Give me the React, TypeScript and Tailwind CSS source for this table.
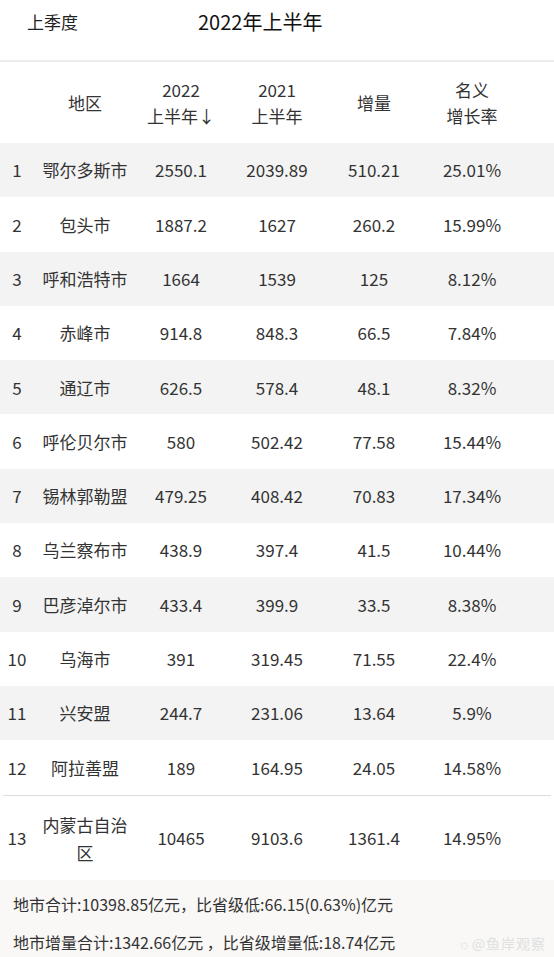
import React from "react";

const rows: [string, string, string, string, string, string][] = [
  ["1", "鄂尔多斯市", "2550.1", "2039.89", "510.21", "25.01%"],
  ["2", "包头市", "1887.2", "1627", "260.2", "15.99%"],
  ["3", "呼和浩特市", "1664", "1539", "125", "8.12%"],
  ["4", "赤峰市", "914.8", "848.3", "66.5", "7.84%"],
  ["5", "通辽市", "626.5", "578.4", "48.1", "8.32%"],
  ["6", "呼伦贝尔市", "580", "502.42", "77.58", "15.44%"],
  ["7", "锡林郭勒盟", "479.25", "408.42", "70.83", "17.34%"],
  ["8", "乌兰察布市", "438.9", "397.4", "41.5", "10.44%"],
  ["9", "巴彦淖尔市", "433.4", "399.9", "33.5", "8.38%"],
  ["10", "乌海市", "391", "319.45", "71.55", "22.4%"],
  ["11", "兴安盟", "244.7", "231.06", "13.64", "5.9%"],
  ["12", "阿拉善盟", "189", "164.95", "24.05", "14.58%"],
];

const grid = "grid grid-cols-[34px_102px_90px_102px_92px_104px_30px] items-center";

export default function App() {
  return (
    <div
      className="w-[554px] h-[957px] overflow-hidden bg-white text-[#333] text-[17px]"
      style={{ fontFamily: '"Noto Sans CJK SC", "Noto Sans", sans-serif' }}
    >
      {/* title bar */}
      <div className="h-[60px] relative">
        <div className="absolute left-[27px] top-[9px] text-[17px] leading-[26px] text-[#222]">上季度</div>
        <div className="absolute left-[198px] top-[7px] text-[20px] leading-[30px] text-[#111]">2022年上半年</div>
      </div>
      <div className="h-[2px] bg-[#ececec]" />
      {/* header */}
      <div className={`${grid} h-[81px] leading-[26px] text-center`}>
        <div />
        <div>地区</div>
        <div>
          <div>2022</div>
          <div>上半年↓</div>
        </div>
        <div>
          <div>2021</div>
          <div>上半年</div>
        </div>
        <div>增量</div>
        <div>
          <div>名义</div>
          <div>增长率</div>
        </div>
        <div />
      </div>
      {/* rows */}
      {rows.map((r, i) => (
        <div
          key={r[0]}
          className={`${grid} h-[54.3px] text-center ${i % 2 === 0 ? "bg-[#f3f3f3]" : "bg-white"}`}
        >
          {r.map((c, j) => (
            <div key={j}>{c}</div>
          ))}
          <div />
        </div>
      ))}
      <div className="h-[1px] bg-[#dcdcdc] mx-[3px]" />
      <div className={`${grid} h-[84px] text-center leading-[28px]`}>
        <div>13</div>
        <div className="pt-[2px]">
          <div>内蒙古自治</div>
          <div>区</div>
        </div>
        <div>10465</div>
        <div>9103.6</div>
        <div>1361.4</div>
        <div>14.95%</div>
        <div />
      </div>
      {/* footer */}
      <div className="relative bg-[#f9f8f6] h-[80px] pl-[13px] pt-[5px] text-[16px] leading-[38px] text-[#333]">
        <div>地市合计:10398.85亿元，比省级低:66.15(0.63%)亿元</div>
        <div>地市增量合计:1342.66亿元 ，比省级增量低:18.74亿元</div>
        <div className="absolute right-[8px] bottom-[8px] text-[14px] leading-[18px] text-[#e0e0e0] tracking-[1px]">
          ☼@鱼岸观察
        </div>
      </div>
    </div>
  );
}
